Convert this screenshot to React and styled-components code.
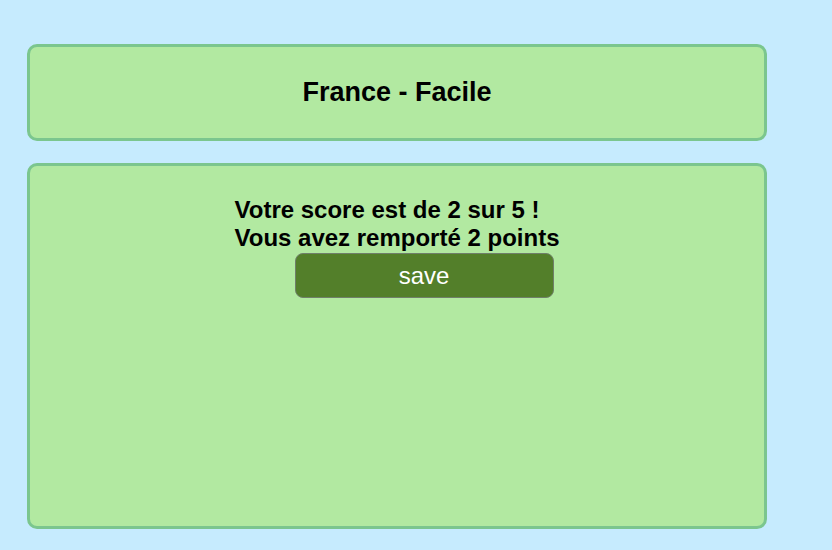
import styled, { createGlobalStyle } from "styled-components";

const GlobalStyle = createGlobalStyle`
  html, body {
    margin: 0;
    padding: 0;
    background: #c6ebfe;
    font-family: "Liberation Sans", Arial, sans-serif;
  }
`;

export default function App() {
  return (
    <>
      <GlobalStyle />
      <Page>
        <HeaderCard>
          <Title>France - Facile</Title>
        </HeaderCard>
        <ResultCard>
          <ResultBlock>
            <ScoreLine>Votre score est de 2 sur 5 !</ScoreLine>
            <ScoreLine>Vous avez remporté 2 points</ScoreLine>
            <SaveButton>save</SaveButton>
          </ResultBlock>
        </ResultCard>
      </Page>
    </>
  );
}

const Page = styled.div`
  width: 740px;
  padding: 44px 0 0 27px;
  display: flex;
  flex-direction: column;
  gap: 22px;
`;

const Card = styled.div`
  box-sizing: border-box;
  background: #b2e9a1;
  border: 3px solid #7bc68e;
  border-radius: 10px;
`;

const HeaderCard = styled(Card)`
  height: 97px;
  display: flex;
  align-items: center;
  justify-content: center;
`;

const Title = styled.h1`
  margin: 0;
  font-size: 27px;
  font-weight: bold;
  color: #000;
`;

const ResultCard = styled(Card)`
  height: 366px;
  display: flex;
  justify-content: center;
  padding-top: 30px;
`;

const ResultBlock = styled.div`
  display: flex;
  flex-direction: column;
  align-items: flex-start;
`;

const ScoreLine = styled.div`
  font-size: 24px;
  font-weight: bold;
  color: #000;
`;

const SaveButton = styled.button`
  margin: 1px 0 0 60px;
  width: 259px;
  height: 45px;
  background: #537f2a;
  color: #fff;
  border: 1px solid #6f7f6a;
  border-radius: 8px;
  font-family: "Liberation Sans", Arial, sans-serif;
  font-size: 24px;
  cursor: pointer;
`;
